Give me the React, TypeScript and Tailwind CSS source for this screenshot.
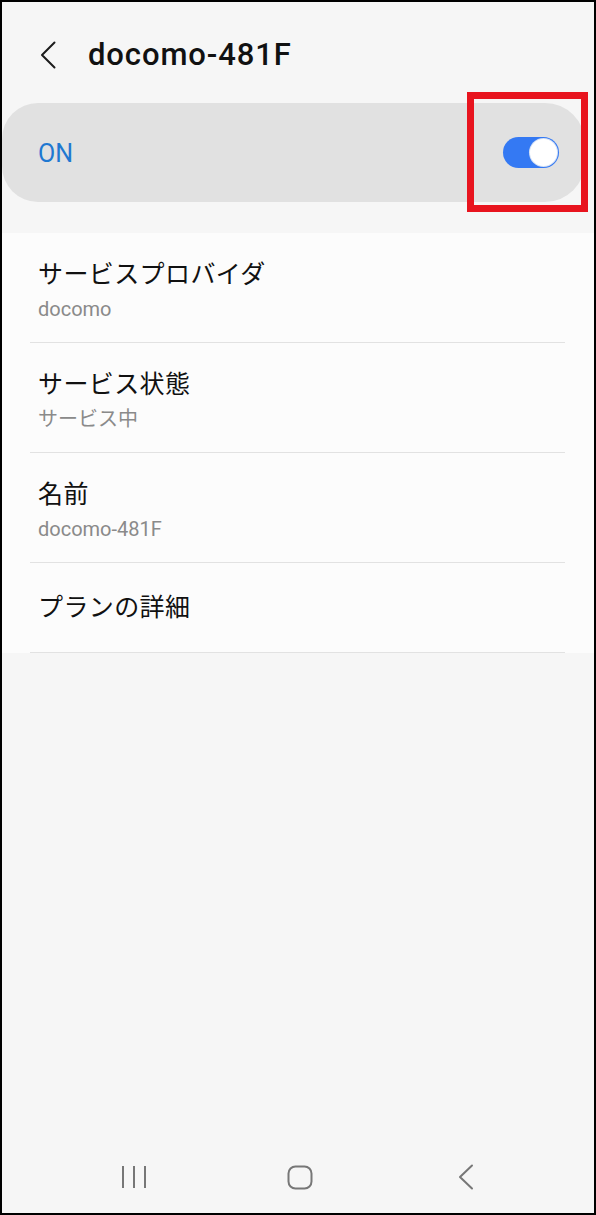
import React from "react";

const rows = [
  { title: "サービスプロバイダ", sub: "docomo", h: "h-[110px]" },
  { title: "サービス状態", sub: "サービス中", h: "h-[110px]" },
  { title: "名前", sub: "docomo-481F", h: "h-[110px]" },
  { title: "プランの詳細", sub: null, h: "h-[90px]" },
];

function BackChevron({ className }: { className?: string }) {
  return (
    <svg width="16" height="28" viewBox="0 0 16 28" className={className}>
      <path d="M14.5 1.5 L2 14 L14.5 26.5" fill="none" stroke="#1c1c1c" strokeWidth="2" strokeLinecap="round" strokeLinejoin="round" />
    </svg>
  );
}

export default function App() {
  return (
    <div className="relative w-[596px] h-[1215px] border-2 border-black bg-[#f6f6f6] flex flex-col font-['Roboto','Noto_Sans_CJK_JP',sans-serif] overflow-hidden">
      {/* Header */}
      <div className="h-[101px] flex items-center pt-1">
        <BackChevron className="ml-[38px]" />
        <h1 className="ml-[32px] text-[31px] leading-none font-medium text-[#111] tracking-[0.9px]">docomo-481F</h1>
      </div>

      {/* Master switch */}
      <div className="h-[99px] mr-[9px] rounded-r-[40px] rounded-l-[36px] bg-[#e1e1e1] flex items-center justify-between pl-[36px] pr-[26px]">
        <span className="text-[25px] leading-none text-[#1f78d1] pt-[2px]">ON</span>
        <div className="w-[56px] h-[31px] rounded-full bg-[#3479f3] flex items-center justify-end pr-[2px]">
          <div className="w-[27px] h-[27px] rounded-full bg-white ring-1 ring-[#d6e2f5]" />
        </div>
      </div>

      {/* Highlight frame */}
      <div className="absolute left-[465px] top-[90px] w-[121px] h-[120px] border-[7px] border-[#e8141e]" />

      {/* List */}
      <div className="mt-[31px] bg-[#fcfcfc]">
        {rows.map((r) => (
          <div
            key={r.title}
            className={`${r.h} ml-[28px] mr-[29px] border-b border-[#e2e2e2] flex flex-col justify-center pl-[8px] ${r.sub ? "pt-[6px]" : ""}`}
          >
            <div className="text-[25px] leading-[30px] text-[#111] tracking-[0.4px]">{r.title}</div>
            {r.sub && <div className="mt-[7px] text-[20px] leading-[24px] text-[#8a8a8a]">{r.sub}</div>}
          </div>
        ))}
      </div>

      <div className="flex-1" />

      {/* Navigation bar */}
      <div className="h-[48px] mb-[12px] flex items-center pl-[49px]">
        <div className="w-[166px] flex justify-center">
          <svg width="26" height="24" viewBox="0 0 26 24">
            <path d="M2 1 V23 M13 1 V23 M24 1 V23" stroke="#777" strokeWidth="2" fill="none" />
          </svg>
        </div>
        <div className="w-[166px] flex justify-center">
          <svg width="26" height="25" viewBox="0 0 26 25">
            <rect x="1.5" y="1.5" width="23" height="22" rx="7" fill="none" stroke="#777" strokeWidth="2" />
          </svg>
        </div>
        <div className="w-[166px] flex justify-center">
          <svg width="16" height="26" viewBox="0 0 16 26">
            <path d="M14 1.5 L2 13 L14 24.5" fill="none" stroke="#777" strokeWidth="2" strokeLinecap="round" strokeLinejoin="round" />
          </svg>
        </div>
      </div>
    </div>
  );
}
